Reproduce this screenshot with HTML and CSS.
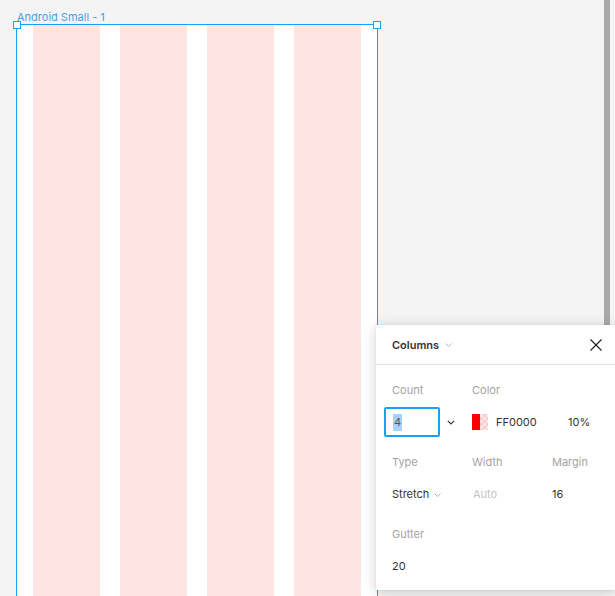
FILE: index.html
```html
<!DOCTYPE html>
<html>
<head>
<meta charset="utf-8">
<link rel="stylesheet" href="styles.css">
</head>
<body>
<div class="canvas">
  <div class="frame-label">Android Small - 1</div>
  <div class="frame">
    <div class="col"></div>
    <div class="col"></div>
    <div class="col"></div>
    <div class="col"></div>
    <span class="handle handle-tl"></span>
    <span class="handle handle-tr"></span>
  </div>
</div>
<div class="scrollbar"></div>
<div class="panel">
  <div class="panel-head">
    <span class="title">Columns</span>
    <svg class="chev chev-title" width="7" height="4" viewBox="0 0 7 4"><path d="M0.5 0.5 L3.5 3.5 L6.5 0.5" fill="none" stroke="#b3b3b3" stroke-width="1"/></svg>
    <svg class="close" width="12" height="12" viewBox="0 0 12 12"><path d="M0.5 0.5 L11.5 11.5 M11.5 0.5 L0.5 11.5" stroke="#222" stroke-width="1.2" fill="none"/></svg>
  </div>
  <div class="panel-body">
    <div class="group">
      <div class="label">Count</div>
      <div class="label">Color</div>
      <div class="label"></div>
      <div class="value count-cell">
        <div class="input"><span class="sel">4</span></div>
        <svg class="chev chev-count" width="8" height="5" viewBox="0 0 8 5"><path d="M0.8 0.8 L4 4 L7.2 0.8" fill="none" stroke="#333" stroke-width="1.2"/></svg>
      </div>
      <div class="value color-cell">
        <span class="swatch"><span class="swatch-solid"></span><span class="swatch-check"></span></span>
        <span>FF0000</span>
      </div>
      <div class="value pct">10%</div>
    </div>
    <div class="group">
      <div class="label">Type</div>
      <div class="label">Width</div>
      <div class="label">Margin</div>
      <div class="value">Stretch<svg class="chev chev-type" width="7" height="4" viewBox="0 0 7 4"><path d="M0.5 0.5 L3.5 3.5 L6.5 0.5" fill="none" stroke="#b3b3b3" stroke-width="1"/></svg></div>
      <div class="value placeholder">Auto</div>
      <div class="value">16</div>
    </div>
    <div class="group">
      <div class="label">Gutter</div>
      <div class="label"></div>
      <div class="label"></div>
      <div class="value">20</div>
    </div>
  </div>
</div>
</body>
</html>
```
FILE: styles.css
```css
html, body {
  margin: 0;
  padding: 0;
  height: 100%;
  overflow: hidden;
}
body {
  background: #f4f4f4;
  font-family: Inter, "Liberation Sans", sans-serif;
  font-size: 11px;
  position: relative;
}
.canvas {
  padding: 10px 0 0 16px;
}
.frame-label {
  color: #4a9fe6;
  font-size: 11px;
  line-height: 14px;
  height: 14px;
  padding-left: 1px;
}
.frame {
  position: relative;
  height: 571px;
  background: #fff;
  border: 1px solid #18a0fb;
  border-bottom: none;
  display: flex;
  gap: 20px;
  padding: 0 16px;
  box-sizing: content-box;
  width: 328px;
}
.col {
  flex: 1;
  background: #ffe4e4;
}
.handle {
  position: absolute;
  width: 6px;
  height: 6px;
  background: #fff;
  border: 1px solid #18a0fb;
  top: -4px;
}
.handle-tl { left: -4px; }
.handle-tr { right: -4px; }
.scrollbar {
  position: absolute;
  left: 604px;
  top: 0;
  width: 6px;
  height: 340px;
  background: #a8a8a8;
}
.panel {
  position: absolute;
  left: 376px;
  top: 325px;
  width: 239px;
  height: 265px;
  background: #fff;
  box-shadow: 0 2px 12px rgba(0, 0, 0, 0.18), 0 0 1px rgba(0, 0, 0, 0.15);
  color: #333;
}
.panel-head {
  height: 39px;
  border-bottom: 1px solid #e5e5e5;
  display: flex;
  align-items: center;
  padding-left: 16px;
}
.title {
  font-weight: 600;
  color: #333;
}
.chev-title {
  margin-left: 6px;
  margin-top: 1px;
}
.close {
  margin-left: auto;
  margin-right: 13px;
}
.panel-body {
  padding: 15px 0 0 16px;
}
.group {
  display: grid;
  grid-template-columns: 80px 80px 80px;
  grid-template-rows: 20px 32px;
  row-gap: 5px;
  margin-bottom: 15px;
}
.label {
  color: #a3a3a3;
  display: flex;
  align-items: center;
}
.value {
  display: flex;
  align-items: center;
  color: #333;
  padding-top: 2px;
}
.count-cell {
  margin-left: -8px;
}
.input {
  box-sizing: border-box;
  width: 56px;
  height: 30px;
  border: 2px solid #18a0fb;
  border-radius: 2px;
  display: flex;
  align-items: center;
  padding-left: 7px;
}
.sel {
  background: #a8d1f7;
  color: #555;
  line-height: 17px;
  padding: 0 1px;
}
.chev-count {
  margin-left: 7px;
}
.swatch {
  display: flex;
  width: 16px;
  height: 16px;
  margin-right: 8px;
}
.swatch-solid {
  width: 8px;
  height: 16px;
  background: #ff0000;
}
.swatch-check {
  width: 8px;
  height: 16px;
  background-color: #ffe6e6;
  background-image:
    linear-gradient(45deg, #f8cccc 25%, transparent 25%, transparent 75%, #f8cccc 75%),
    linear-gradient(45deg, #f8cccc 25%, transparent 25%, transparent 75%, #f8cccc 75%);
  background-size: 6px 6px;
  background-position: 0 0, 3px 3px;
}
.pct {
  padding-left: 16px;
}
.chev-type {
  margin-left: 5px;
  margin-top: 1px;
}
.placeholder {
  color: #c4c4c4;
  padding-left: 1px;
}
```
